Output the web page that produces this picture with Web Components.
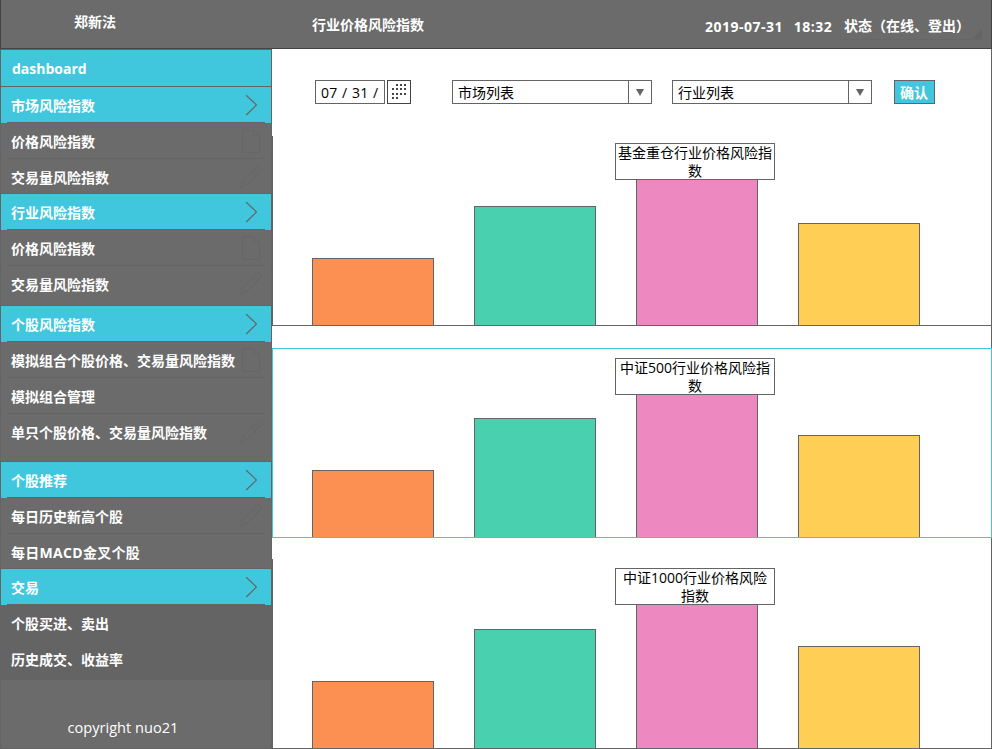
<!DOCTYPE html>
<html lang="zh-CN">
<head>
<meta charset="utf-8">
<title>行业价格风险指数</title>
<style>
html,body{margin:0;padding:0;background:#fff}
body{width:992px;height:749px;overflow:hidden;font:14px/18px "Open Sans","Noto Sans CJK SC",sans-serif;color:#000}
</style>
</head>
<body>
<risk-app></risk-app>
<script>
const define = (name, html, setup) => {
  const t = document.createElement('template');
  t.innerHTML = html;
  customElements.define(name, class extends HTMLElement {
    connectedCallback() {
      if (this.shadowRoot) return;
      this.attachShadow({mode: 'open'}).append(t.content.cloneNode(true));
      if (setup) setup(this, this.shadowRoot);
    }
  });
};

define('app-header', `
<style>
:host{display:flex;box-sizing:border-box;height:49px;background:#6b6b6b;border:solid #444;border-width:0 1px 1px;color:#fff;font-weight:700}
.user{width:311px;padding:13px 0 0 73px;box-sizing:border-box}
.title{flex:1;padding-top:16px}
.date{padding-top:18px;width:134px;white-space:pre;letter-spacing:.5px;word-spacing:1.2px}
.status{position:relative;box-sizing:border-box;width:143px;height:40px;padding:17px 0 0 5px;margin-right:9px;border-bottom:1px solid #676767;white-space:nowrap}
.status::after{content:"";position:absolute;right:0;bottom:0;width:10px;height:10px;background:#656565;clip-path:polygon(100% 0,100% 100%,0 100%)}
</style>
<div class="user">郑新法</div><div class="title">行业价格风险指数</div>
<div class="date">2019-07-31  18:32</div><div class="status">状态（在线、登出）</div>`);

define('nav-head', `
<style>
:host{display:flex;position:relative;justify-content:space-between;height:36px;background:#40c7dd;color:#fff;font-weight:700;padding:0 14px 0 10px}
:host::after{content:"";position:absolute;left:6px;right:6px;bottom:0;height:1px;background:#646464}
:host([plain])::after{left:0;right:0;bottom:-1px}
:host([plain]){padding-bottom:1px;padding-left:11px}
:host([plain]) svg{display:none}
span{line-height:37px}
svg{width:12px;height:22px;margin-top:7px;fill:none;stroke:#646464;stroke-width:1.2}
</style>
<span><slot></slot></span><svg viewBox="0 0 12 22"><path d="M1.200 1.200 11.500 11 1.200 21"/></svg>`);

define('nav-item', `
<style>
:host{display:flex;box-sizing:border-box;justify-content:space-between;height:36px;color:#fff;font-weight:700;padding:0 8px 0 10px;
background:linear-gradient(#646464,#646464) 6px 35px/258px 1px no-repeat}
:host([tail]){background:none;height:35px;border-bottom:1px solid #646464}
:host([h="40"]){height:40px}:host([h="48"]){height:48px}
:host([dark]){background:#646464;border:0}
:host([h="39"]){height:39px}
:host([wide]){letter-spacing:.3px}
span{line-height:37px;white-space:nowrap}
svg{width:24px;height:26px;margin-top:5px;fill:none;stroke:#666;flex:none}
</style>
<span><slot></slot></span>`, (el, root) => {
  const shapes = {
    doc: '<path d="M3.500 1.500h11l6 6v17h-17zM14.500 1.500v6h6"/>',
    pencil: '<path d="m1.500 24 2-7L16 4.500l3-3 4 4-3 3L7.500 21zM3.500 17l4 4M16 4.500l4 4M13 9l2-2 3 3-2 2z"/>'
  };
  const k = el.getAttribute('icon');
  if (k) root.querySelector('span').insertAdjacentHTML('afterend', '<svg viewBox="0 0 24 26">' + shapes[k] + '</svg>');
});

define('side-nav', `
<style>
:host{display:flex;flex-direction:column;box-sizing:border-box;width:272px;height:700px;background:#6b6b6b;border:1px solid #646464}
nav-head[plain]{height:35px;margin-bottom:1px}
footer{flex:1;color:#fff;padding:38px 0 0 66.500px;font-size:14.600px}
</style>
<nav-head plain>dashboard</nav-head>
<nav-head>市场风险指数</nav-head>
<nav-item icon="doc">价格风险指数</nav-item>
<nav-item icon="pencil" tail>交易量风险指数</nav-item>
<nav-head>行业风险指数</nav-head>
<nav-item icon="doc">价格风险指数</nav-item>
<nav-item icon="pencil" tail h="40">交易量风险指数</nav-item>
<nav-head>个股风险指数</nav-head>
<nav-item icon="doc">模拟组合个股价格、交易量风险指数</nav-item>
<nav-item>模拟组合管理</nav-item>
<nav-item icon="pencil" tail h="48">单只个股价格、交易量风险指数</nav-item>
<nav-head>个股推荐</nav-head>
<nav-item icon="pencil">每日历史新高个股</nav-item>
<nav-item tail wide>每日MACD金叉个股</nav-item>
<nav-head>交易</nav-head>
<nav-item dark>个股买进、卖出</nav-item>
<nav-item dark h="39">历史成交、收益率</nav-item>
<footer>copyright nuo21</footer>`);

define('date-field', `
<style>
:host{display:flex;gap:2px}
.v{box-sizing:border-box;width:70px;height:24px;border:1px solid #646464;line-height:24px;padding-left:5px;white-space:nowrap;letter-spacing:.2px;word-spacing:.8px}
.b{box-sizing:border-box;width:24px;height:24px;border:1px solid #444}
svg{display:block;fill:#444}
</style>
<div class="v">07 / 31 /</div><div class="b"><svg width="22" height="22" shape-rendering="crispEdges"></svg></div>`, (el, root) => {
  let s = '';
  for (let r = 0; r < 4; r++) for (let c = 0; c < 4; c++)
    if (!(r === 0 && c === 0) && !(r === 3 && c > 1)) s += `<rect x="${4 + c * 4}" y="${3 + Math.round(r * 4.4)}" width="2" height="2"/>`;
  root.querySelector('svg').innerHTML = s;
});

define('drop-list', `
<style>
:host{display:flex;box-sizing:border-box;width:200px;height:24px;border:1px solid #646464}
span{flex:1;padding-left:5px;line-height:24px}
i{width:22px;border-left:1px solid #646464;display:flex;justify-content:center;align-items:center}
</style>
<span><slot></slot></span><i><svg width="8" height="7"><path d="M0 0h8L4 7z" fill="#646464"/></svg></i>`);

define('confirm-button', `
<style>:host{display:block;box-sizing:border-box;width:41px;height:24px;border:1px solid #646464;background:#40c7dd;color:#fff;font-weight:700;padding-left:5px;line-height:24px}</style><slot></slot>`);

define('bar-chart', `
<style>
:host{display:flex;box-sizing:border-box;height:190px;gap:40px;align-items:flex-end;padding-left:39px;border:1px solid #646464;border-top:0}
:host([active]){border:1px solid #40c7dd}
div{position:relative;box-sizing:border-box;width:122px;border:1px solid #646464;border-bottom:0}
p{position:absolute;box-sizing:border-box;margin:0;left:-22px;bottom:var(--b,145px);width:160px;height:37px;border:1px solid #646464;background:#fff;text-align:center;line-height:18px;line-break:anywhere}
</style>
<div style="height:67px;background:#fc8f52"></div>
<div style="height:119px;background:#48d0af"></div>
<div style="height:150px;background:#ee88c0"><p><slot></slot></p></div>
<div style="height:102px;background:#ffce54"></div>`);

define('risk-main', `
<style>
:host{display:flex;flex-direction:column;flex:1;height:700px}
.bar{display:flex;box-sizing:border-box;height:87px;padding:31px 0 0 43px;border-right:1px solid #646464}
drop-list{margin-left:41px}drop-list+drop-list{margin-left:20px}confirm-button{margin-left:22px}
.gap{border-right:1px solid #646464}
</style>
<div class="bar"><date-field></date-field><drop-list>市场列表</drop-list><drop-list>行业列表</drop-list><confirm-button>确认</confirm-button></div>
<bar-chart style="--b:145px">基金重仓行业价格风险指数</bar-chart>
<div class="gap" style="height:22px"></div>
<bar-chart active style="--b:142px">中证500行业价格风险指数</bar-chart>
<div class="gap" style="height:21px"></div>
<bar-chart style="--b:143px">中证1000行业价格风险指数</bar-chart>`);

define('risk-app', `
<style>:host{display:block;width:992px;height:749px}.body{display:flex}</style>
<app-header></app-header><div class="body"><side-nav></side-nav><risk-main></risk-main></div>`);
</script>
</body>
</html>
